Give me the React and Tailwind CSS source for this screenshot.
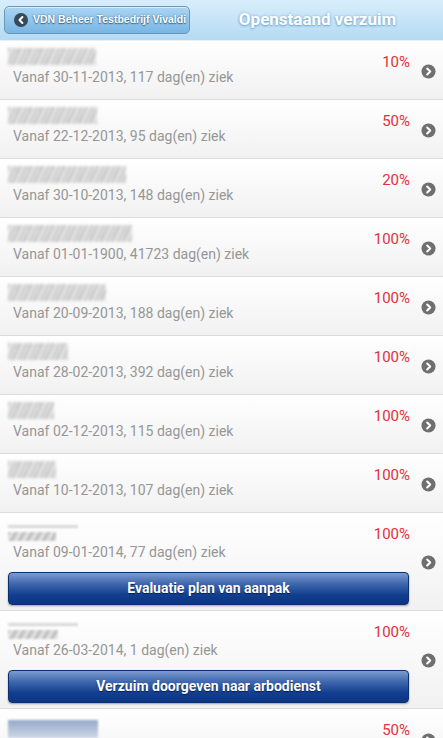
import React from 'react';

const rows = [
    { name: 'w-[88px]', from: '30-11-2013', days: '117', pct: '10%' },
    { name: 'w-[89px]', from: '22-12-2013', days: '95', pct: '50%' },
    { name: 'w-[118px]', from: '30-10-2013', days: '148', pct: '20%' },
    { name: 'w-[124px]', from: '01-01-1900', days: '41723', pct: '100%' },
    { name: 'w-[98px]', from: '20-09-2013', days: '188', pct: '100%' },
    { name: 'w-[60px]', from: '28-02-2013', days: '392', pct: '100%' },
    { name: 'w-[46px]', from: '02-12-2013', days: '115', pct: '100%' },
    { name: 'w-[48px]', from: '10-12-2013', days: '107', pct: '100%' },
    { name: 'w-[48px]', from: '09-01-2014', days: '77', pct: '100%', action: 'Evaluatie plan van aanpak', thin: true },
    { name: 'w-[50px]', from: '26-03-2014', days: '1', pct: '100%', action: 'Verzuim doorgeven naar arbodienst', thin: true },
    { name: 'w-[90px]', from: '', days: '', pct: '50%', blue: true },
];

const Chevron = () => (
    <svg width="15" height="15" viewBox="0 0 16 16">
        <circle cx="8" cy="8" r="7.5" fill="#6f6f6f" />
        <path d="M6.6 4.8 L9.8 8 L6.6 11.2" fill="none" stroke="#fff" strokeWidth="2.2" strokeLinecap="round" strokeLinejoin="round" />
    </svg>
);

const BlurName = ({ width, thin, blue }) => {
    if (blue) {
        return (
            <div className="h-[22px] flex flex-col justify-end">
                <div className={`${width} h-[18px] bg-[linear-gradient(180deg,#8aa0c4,#c9d4e6)] blur-[1px] opacity-90`}></div>
            </div>
        );
    }
    if (thin) {
        return (
            <div className="h-[22px] flex flex-col justify-end gap-[4px] pb-[1px]">
                <div className="w-[70px] h-[3px] bg-[#d8d8d8] blur-[1px]"></div>
                <div className={`${width} h-[9px] bg-[repeating-linear-gradient(120deg,#a8a8a8_0px,#e6e6e6_4px,#a8a8a8_7px)] blur-[1px] opacity-80`}></div>
            </div>
        );
    }
    return (
        <div className="h-[19px] flex flex-col justify-start">
            <div className={`${width} h-[17px] bg-[repeating-linear-gradient(115deg,#9a9a9a_0px,#e8e8e8_4px,#b4b4b4_7px,#f2f2f2_10px)] blur-[1.5px] opacity-75`}></div>
        </div>
    );
};

export default function App() {
    return (
        <div className="w-[443px] h-[738px] overflow-hidden bg-white font-['Roboto','Liberation_Sans',sans-serif]">
            {/* header */}
            <div className="h-[41px] flex items-center px-[4px] bg-[linear-gradient(180deg,#d9eefb,#b4daf3)] border-b border-[#e4f1fa]">
                <button className="h-[28px] w-[186px] flex items-center gap-[5px] pl-[9px] rounded-[5px] border border-[#6c95b8] bg-[linear-gradient(180deg,#a9d5f3,#79b5e2)] shadow-[inset_0_1px_0_rgba(255,255,255,0.6)]">
                    <svg width="14" height="14" viewBox="0 0 16 16">
                        <circle cx="8" cy="8" r="8" fill="#38495c" />
                        <path d="M9.6 4.6 L6.3 8 L9.6 11.4" fill="none" stroke="#fff" strokeWidth="2.3" strokeLinecap="round" strokeLinejoin="round" />
                    </svg>
                    <span className="text-[10.5px] font-bold text-white [text-shadow:0_0_2px_#3d6d94,0_1px_1px_#3d6d94] font-['Liberation_Sans',sans-serif]">VDN Beheer Testbedrijf Vivaldi</span>
                </button>
                <div className="flex-1 text-center pl-[6px] text-[17px] font-bold text-white [text-shadow:0_0_3px_#7fb3d9,0_1px_2px_#6aa3cf]">Openstaand verzuim</div>
            </div>

            {/* list */}
            <div className="flex flex-col">
                {rows.map((r, i) => (
                    <div key={i} className="flex items-center pl-[8px] pr-[7px] border-b border-[#dcdcdc] bg-[linear-gradient(180deg,#ffffff,#f1f1f1)]">
                        <div className="flex-1 flex flex-col pt-[7px] pb-[4px]">
                            <div className="flex">
                                <div className="flex-1 flex flex-col">
                                    <BlurName width={r.name} thin={r.thin} blue={r.blue} />
                                    <div className="h-[20px] pl-[5px] text-[14px] leading-[20px] text-[#969696]">
                                        {r.from && `Vanaf ${r.from}, ${r.days} dag(en) ziek`}
                                    </div>
                                </div>
                                <div className="pt-[4px] text-[15px] leading-[20px] text-[#e3303d]">{r.pct}</div>
                            </div>
                            {r.action ? (
                                <button className="mt-[10px] mb-[1px] mr-[1px] h-[33px] rounded-[4px] border border-[#0b2f73] bg-[linear-gradient(180deg,#7d9bd0_0%,#3f67ad_35%,#123f8f_70%,#0b3484_100%)] shadow-[0_1px_2px_rgba(0,0,0,0.35)] text-white text-[14px] font-bold [text-shadow:0_1px_1px_#061c4a]">
                                    {r.action}
                                </button>
                            ) : (
                                <div className="h-[8px]"></div>
                            )}
                        </div>
                        <div className="ml-[11px] flex items-center pt-[2px]">
                            <Chevron />
                        </div>
                    </div>
                ))}
            </div>
        </div>
    );
}
